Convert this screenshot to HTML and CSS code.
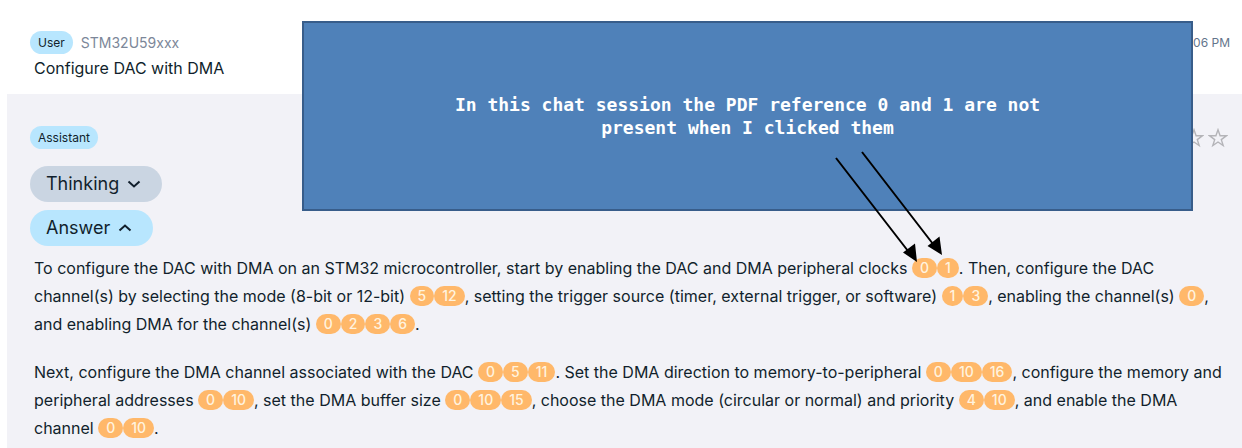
FILE: index.html
```html
<!DOCTYPE html>
<html lang="en">
<head>
<meta charset="utf-8">
<title>Chat session</title>
<link rel="stylesheet" href="styles.css">
</head>
<body>
<main class="chat">
  <section class="message message-user">
    <header class="message-head">
      <span class="role">User</span>
      <span class="device">STM32U59xxx</span>
      <time class="time">06 PM</time>
    </header>
    <p class="question">Configure DAC with DMA</p>
  </section>
  <section class="message message-assistant">
    <header class="message-head">
      <span class="role">Assistant</span>
      <div class="rating">
        <button class="star" type="button" aria-label="Rate 4 stars"><svg viewBox="0 0 20 20"><path d="M10 1.8l2.1 6h6.2l-5 3.8 1.9 6-5.2-3.6-5.2 3.6 1.9-6-5-3.8h6.2z"/></svg></button>
        <button class="star" type="button" aria-label="Rate 5 stars"><svg viewBox="0 0 20 20"><path d="M10 1.8l2.1 6h6.2l-5 3.8 1.9 6-5.2-3.6-5.2 3.6 1.9-6-5-3.8h6.2z"/></svg></button>
      </div>
    </header>
    <div class="toggles">
      <button class="toggle toggle-thinking" type="button" aria-expanded="false">Thinking <svg class="chevron" viewBox="0 0 14 14"><path d="M1.500 4.500l5.500 5 5.500-5"/></svg></button>
      <button class="toggle toggle-answer" type="button" aria-expanded="true">Answer <svg class="chevron" viewBox="0 0 14 14"><path d="M1.500 9.500l5.500-5 5.500 5"/></svg></button>
    </div>
    <div class="answer">
      <p>To configure the DAC with DMA on an STM32 microcontroller, start by enabling the DAC and DMA peripheral clocks <button class="cite" type="button">0</button><button class="cite" type="button">1</button>. Then, configure the DAC channel(s) by selecting the mode (8-bit or 12-bit) <button class="cite" type="button">5</button><button class="cite" type="button">12</button>, setting the trigger source (timer, external trigger, or software) <button class="cite" type="button">1</button><button class="cite" type="button">3</button>, enabling the channel(s) <button class="cite" type="button">0</button>, and enabling DMA for the channel(s) <button class="cite" type="button">0</button><button class="cite" type="button">2</button><button class="cite" type="button">3</button><button class="cite" type="button">6</button>.</p>
      <p>Next, configure the DMA channel associated with the DAC <button class="cite" type="button">0</button><button class="cite" type="button">5</button><button class="cite" type="button">11</button>. Set the DMA direction to memory-to-peripheral <button class="cite" type="button">0</button><button class="cite" type="button">10</button><button class="cite" type="button">16</button>, configure the memory and peripheral addresses <button class="cite" type="button">0</button><button class="cite" type="button">10</button>, set the DMA buffer size <button class="cite" type="button">0</button><button class="cite" type="button">10</button><button class="cite" type="button">15</button>, choose the DMA mode (circular or normal) and priority <button class="cite" type="button">4</button><button class="cite" type="button">10</button>, and enable the DMA channel <button class="cite" type="button">0</button><button class="cite" type="button">10</button>.</p>
    </div>
  </section>
</main>
<aside class="callout"><p class="callout-text">In this chat session the PDF reference 0 and 1 are not present when I clicked them</p></aside>
<svg class="arrows" viewBox="0 0 120 120" aria-hidden="true">
  <path class="shaft" d="M6 8L78 101M32 2L103 94"/>
  <path d="M87 112L73 102.500L85 93.500zM112 105L97.500 96L109.500 86.500z"/>
</svg>
</body>
</html>
```

FILE: styles.css
```css
* {
  box-sizing: border-box;
}

body {
  position: relative;
  margin: 0;
  background: #fff;
  color: #111f2c;
  font: 16px/28px Inter, "Liberation Sans", sans-serif;
}

p {
  margin: 0;
}

button {
  border: 0;
  padding: 0;
  color: inherit;
  font: inherit;
  cursor: pointer;
}

.chat {
  margin-left: 7px;
}

.message {
  padding: 32px 12px 0 23px;
}

.message-user {
  padding-top: 31px;
  padding-bottom: 12px;
}

.message-assistant {
  min-height: calc(100vh - 94px);
  background: #f2f2f7;
}

.message-head {
  display: flex;
  align-items: center;
  gap: 8px;
}

.role {
  padding: 0 8px;
  border-radius: 12px;
  background: #b8e6fe;
  font-size: 12px;
  line-height: 23px;
}

.device {
  color: #7c8799;
  font-size: 14px;
  line-height: 22px;
}

.time {
  margin-left: auto;
  color: #64748b;
  font-size: 12px;
  line-height: 20px;
}

.question {
  padding-left: 4px;
}

.rating {
  display: flex;
  gap: 4px;
  margin-left: auto;
  padding-right: 2px;
}

.star {
  width: 20px;
  height: 20px;
  background: none;
}

.star svg {
  display: block;
  fill: none;
  stroke: #b4b4b8;
  stroke-width: 1.4;
}

.toggles {
  display: flex;
  flex-direction: column;
  align-items: flex-start;
  gap: 8px;
  margin-top: 17px;
}

.toggle {
  display: flex;
  align-items: center;
  gap: 8px;
  padding: 0 21px 0 16px;
  border-radius: 18px;
  font-size: 18px;
  line-height: 36px;
}

.toggle-thinking {
  background: #cad5e2;
}

.toggle-answer {
  background: #b8e6fe;
}

.chevron {
  width: 14px;
  height: 14px;
  fill: none;
  stroke: currentColor;
  stroke-width: 2;
}

.answer {
  display: grid;
  gap: 20px;
  padding: 8px 0 0 4px;
}

.cite {
  padding: 0 8px;
  border-radius: 10px;
  background: #ffb86a;
  color: #fff3df;
  font-size: 14px;
  font-weight: 500;
  line-height: 20px;
  vertical-align: 1px;
}

.callout {
  position: absolute;
  top: 21px;
  left: 302px;
  right: 49px;
  display: flex;
  align-items: center;
  justify-content: center;
  height: 190px;
  border: 2px solid #385d8a;
  background: #4f81b9;
}

.callout-text {
  max-width: 640px;
  color: #fff;
  font: bold 18px/23px "DejaVu Sans Mono", "Liberation Mono", monospace;
  text-align: center;
}

.arrows {
  position: absolute;
  top: 150px;
  left: 830px;
  width: 120px;
  height: 120px;
  pointer-events: none;
}

.shaft {
  fill: none;
  stroke: #000;
  stroke-width: 2;
}
```
